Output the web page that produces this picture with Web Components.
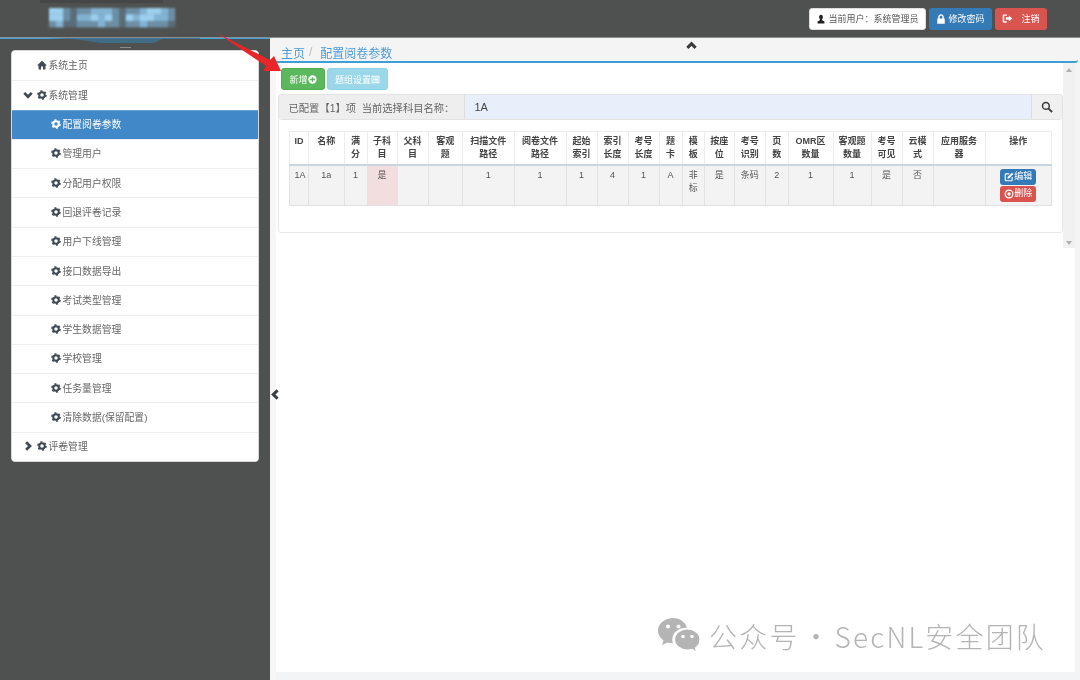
<!DOCTYPE html>
<html lang="zh">
<head>
<meta charset="utf-8">
<title>配置阅卷参数</title>
<style>
html,body{margin:0;padding:0;background:#fff}
body{font-family:"Liberation Sans","Noto Sans CJK SC",sans-serif;font-size:10px;color:#555}
</style>
</head>
<body>
<x-app></x-app>
<script>
const ICONS={
home:'<path fill="currentColor" d="M8 1 16 8.600H13.500V15H9.600V10.200H6.400V15H2.500V8.600H0Z"/>',
cog:'<circle cx="8" cy="8" r="4.400" fill="none" stroke="currentColor" stroke-width="3.200"/><circle cx="8" cy="8" r="6.400" fill="none" stroke="currentColor" stroke-width="2.600" stroke-dasharray="3.200 3.500"/>',
down:'<path fill="none" stroke="currentColor" stroke-width="4.400" d="M2 4.600 8 10.800 14 4.600"/>',
right:'<path fill="none" stroke="currentColor" stroke-width="4.400" d="M5 2 11.200 8 5 14"/>',
left:'<path fill="none" stroke="currentColor" stroke-width="4.400" d="M11 2 4.800 8 11 14"/>',
up:'<path fill="none" stroke="currentColor" stroke-width="4.400" d="M2 11.400 8 5.200 14 11.400"/>',
user:'<path fill="currentColor" d="M8 1C6 1 5 2.500 5 4.500 5 6.500 6 8.500 6.600 9.500L2.500 12V15H13.500V12L9.400 9.500C10 8.500 11 6.500 11 4.500 11 2.500 10 1 8 1Z"/>',
lock:'<path fill="currentColor" fill-rule="evenodd" d="M2 7H3.500V4.800C3.500 2.400 5.600 .5 8 .5S12.500 2.400 12.500 4.800V7H14V15.500H2ZM5.800 7H10.200V4.800C10.200 3.600 9.200 2.800 8 2.800S5.800 3.600 5.800 4.800Z"/>',
logout:'<path fill="currentColor" d="M1 3.500C1 2.500 1.800 2 2.600 2H7V4H3.200V12H7V14H2.600C1.800 14 1 13.500 1 12.500Z"/><path fill="currentColor" d="M5.500 6.300H10V3.500L15 8 10 12.500V9.700H5.500Z"/>',
search:'<circle cx="6.500" cy="6.500" r="4.500" fill="none" stroke="currentColor" stroke-width="2"/><path stroke="currentColor" stroke-width="2.600" d="M9.800 9.800 14.800 14.800"/>',
plus:'<path fill="currentColor" fill-rule="evenodd" d="M8 .5A7.500 7.500 0 1 1 8 15.500 7.500 7.500 0 1 1 8 .5ZM6.800 3.800V6.800H3.800V9.200H6.800V12.200H9.200V9.200H12.200V6.800H9.200V3.800Z"/>',
list:'<path fill="currentColor" fill-rule="evenodd" d="M1 1.500H15V14.500H1ZM2.500 3V13H13.500V3ZM3.500 4.500H5V6H3.500ZM6 4.500H12.500V6H6ZM3.500 7.200H5V8.700H3.500ZM6 7.200H12.500V8.700H6ZM3.500 9.900H5V11.400H3.500ZM6 9.900H12.500V11.400H6Z"/>',
edit:'<path fill="none" stroke="currentColor" stroke-width="1.800" d="M8.500 3H3.300C2.500 3 2 3.500 2 4.300V12.700C2 13.500 2.500 14 3.300 14H11.700C12.500 14 13 13.500 13 12.700V8"/><path fill="currentColor" d="M12.800 1.200 14.900 3.300 8 10.200 5.400 10.700 5.900 8.100Z"/>',
remove:'<circle cx="8" cy="8" r="6.200" fill="none" stroke="currentColor" stroke-width="1.900"/><circle cx="8" cy="8" r="2.800" fill="currentColor"/>'
};
class XIcon extends HTMLElement{
  connectedCallback(){
    if(this.shadowRoot)return;
    const r=this.attachShadow({mode:'open'});
    const s=this.getAttribute('size')||10;
    r.innerHTML='<style>:host{display:inline-flex;flex:none;width:'+s+'px;height:'+s+'px}svg{width:100%;height:100%;display:block}</style><svg viewBox="0 0 16 16">'+ICONS[this.getAttribute('name')]+'</svg>';
  }
}
customElements.define('x-icon',XIcon);

class XBtn extends HTMLElement{
  constructor(){super();this.attachShadow({mode:'open'}).innerHTML=`<style>
  :host{display:inline-flex;align-items:center;justify-content:center;box-sizing:border-box;border-radius:3px;height:var(--h,22px);font-size:9px;color:#fff;background:var(--bg,#5cb85c);border:1px solid var(--bd,transparent);white-space:nowrap}
  </style><slot></slot>`}
}
customElements.define('x-btn',XBtn);

const MOSAIC=['331011222101123321','331022323103233221','120011121101121110'];
const MC=['#5a6c78','#6d8fa6','#83b3d3','#9cd0ee'];
const cells=MOSAIC.map((row,y)=>[...row].map((c,x)=>`<rect x="${9+x*7}" y="${8+y*6.400}" width="7.200" height="6.600" fill="${MC[+c]}"/>`).join('')).join('');

class XTopbar extends HTMLElement{
  constructor(){super();this.attachShadow({mode:'open'}).innerHTML=`<style>
  :host{display:flex;justify-content:flex-end;align-items:center;box-sizing:border-box;height:38px;background:#4f5150;padding:0 33px 0 0;gap:3px;border-bottom:1px solid #8d8f8f;position:relative;z-index:1}
  .u{width:117px;--bg:#fff;--bd:#ddd;color:#555;gap:2px}
  .p{width:63px;--bg:#337ab7;gap:2px}
  .o{width:52px;--bg:#d9534f;gap:8px}
  .line{position:absolute;left:0;bottom:-2px;width:270px;height:1.500px;background:#3aa6e6}
  .logo{position:absolute;left:40px;top:0;width:170px;height:48px}
  .u x-icon{color:#222}
  </style>
  <div class="line"></div>
  <svg class="logo" viewBox="0 0 170 48"><defs><filter id="b" x="-10%" y="-30%" width="120%" height="160%"><feGaussianBlur stdDeviation="1.300"/></filter></defs>
    <rect x="-7" y="0" width="130" height="3" fill="#454746"/>
    <g filter="url(#b)"><rect x="9" y="8" width="126" height="19" fill="#5f7887"/>${cells}</g>
    <path d="M7 38H160V39L122 39 114 43H60L38 39.500Z" fill="#3f6f8c" opacity=".9"/>
    <rect x="80" y="47" width="11" height="1" fill="#8a8c8c"/>
  </svg>
  <x-btn class="u"><x-icon name="user" size="10"></x-icon>当前用户：系统管理员</x-btn>
  <x-btn class="p"><x-icon name="lock" size="10"></x-icon>修改密码</x-btn>
  <x-btn class="o"><x-icon name="logout" size="11"></x-icon>注销</x-btn>`}
}
customElements.define('x-topbar',XTopbar);

class XNavItem extends HTMLElement{
  constructor(){super();
    const lvl=this.getAttribute('level')||'1';
    const arrow=this.getAttribute('arrow');
    const icon=this.getAttribute('icon')||'cog';
    this.attachShadow({mode:'open'}).innerHTML=`<style>
    :host{display:flex;align-items:center;box-sizing:border-box;height:100%;border-top:1px solid #eee;color:#666;font-size:9.800px;gap:2px;padding:0 0 1px ${lvl==='2'?'38.500px':'10.500px'};background:#fff}
    :host(:first-child){border-top:0}
    :host([active]){background:#4088c8;color:#fff;border-top-color:#69a3d6}
    x-icon{color:#3f4a55}
    :host([active]) x-icon{color:#fff}
    .a{width:11px;display:inline-flex;color:#3f4a55;margin-right:1px}
    .i{display:inline-flex}
    </style>
    ${lvl==='1'?'<span class="a">'+(arrow?'<x-icon name="'+arrow+'" size="10"></x-icon>':'')+'</span>':''}
    <span class="i"><x-icon name="${icon}" size="10"></x-icon></span><span><slot></slot></span>`}
}
customElements.define('x-nav-item',XNavItem);

class XSidenav extends HTMLElement{
  constructor(){super();this.attachShadow({mode:'open'}).innerHTML=`<style>
  :host{display:block;box-sizing:border-box;background:#4f5150;padding:12px 11px 0 11px}
  .card{display:grid;grid-template-rows:repeat(14,1fr);height:412px;box-sizing:border-box;background:#fff;border:1px solid #d8d8d8;border-radius:4px;overflow:hidden}
  </style><div class="card"><slot></slot></div>`}
}
customElements.define('x-sidenav',XSidenav);

class XCrumbs extends HTMLElement{
  constructor(){super();this.attachShadow({mode:'open'}).innerHTML=`<style>
  :host{display:flex;align-items:center;box-sizing:border-box;height:25px;background:#f4f4f4;border-bottom:2px solid #3d9fd8;border-radius:0 0 3px 0;padding:5px 0 0 11px;color:#4d9bd9;font-size:12px;position:relative;margin-right:-3px}
  .s{color:#bbb;margin:0 8px 0 4px;font-size:12px}
  x-icon{position:absolute;left:416px;top:2px;color:#3a3a3a}
  </style><span>主页</span><span class="s">/</span><span>配置阅卷参数</span><x-icon name="up" size="11"></x-icon>`}
}
customElements.define('x-crumbs',XCrumbs);

class XToolbar extends HTMLElement{
  constructor(){super();this.attachShadow({mode:'open'}).innerHTML=`<style>
  :host{display:flex;gap:2px;padding:5px 0 4px 5px}
  .a{width:44px;--bg:#5cb85c;--bd:#4cae4c}
  .b{width:61px;--bg:#9ad7e9;--bd:#8fd2e6}
  </style><x-btn class="a">新增<x-icon name="plus" size="9"></x-icon></x-btn><x-btn class="b">题组设置<x-icon name="list" size="9"></x-icon></x-btn>`}
}
customElements.define('x-toolbar',XToolbar);

class XSearchRow extends HTMLElement{
  constructor(){super();this.attachShadow({mode:'open'}).innerHTML=`<style>
  :host{display:grid;grid-template-columns:186px 1fr 31px;height:26px;box-sizing:border-box;border:1px solid #e3e3e3;border-radius:4px;overflow:hidden;font-size:10.300px;margin:-1px -1px 0}
  .l{background:#eee;display:flex;align-items:center;padding-left:10px;color:#666;border-right:1px solid #ddd;white-space:pre}
  .m{background:#e8effb;display:flex;align-items:center;padding-left:10px;color:#444;font-size:11px}
  .r{background:#f0f0f0;border-left:1px solid #ddd;display:flex;align-items:center;justify-content:center;color:#3a3a3a}
  </style><div class="l">已配置【1】项  当前选择科目名称：</div><div class="m">1A</div><div class="r"><x-icon name="search" size="12"></x-icon></div>`}
}
customElements.define('x-search-row',XSearchRow);

class XConfigTable extends HTMLElement{
  constructor(){super();
  const cols=[[19,'ID','1A'],[35.500,'名称','1a'],[23,'满分','1'],[30,'子科目','是'],[31,'父科目',''],[34.500,'客观题',''],[51.500,'扫描文件路径','1'],[52,'阅卷文件路径','1'],[31,'起始索引','1'],[31,'索引长度','4'],[31,'考号长度','1'],[23,'题卡','A'],[22.500,'模板','非标'],[29.500,'按座位','是'],[31.500,'考号识别','条码'],[22.500,'页数','2'],[45,'OMR区数量','1'],[38,'客观题数量','1'],[31,'考号可见','是'],[31,'云模式','否'],[52,'应用服务器',''],[66.500,'操作',null]];
  const colg=cols.map(c=>`<col style="width:${c[0]}px">`).join('');
  const th=cols.map(c=>`<th>${c[1]}</th>`).join('');
  const td=cols.map((c,i)=>c[2]===null?`<td class="ops"><x-btn class="e"><x-icon name="edit" size="10"></x-icon>编辑</x-btn><x-btn class="d"><x-icon name="remove" size="10"></x-icon>删除</x-btn></td>`:`<td${i===3?' class="hl"':''}>${c[2]}</td>`).join('');
  this.attachShadow({mode:'open'}).innerHTML=`<style>
  :host{display:block;padding:11px 0 0 10.500px}
  table{border-collapse:collapse;table-layout:fixed;width:761px;font-size:9px;line-height:13px;color:#555;border:1px solid #e6e6e6}
  th{height:33px;box-sizing:border-box;border:1px solid #ececec;border-bottom:2px solid #c9d4e0;padding:3px 4.500px 0;vertical-align:top;font-weight:700;color:#444;text-align:center;background:#fff}
  td{height:41px;box-sizing:border-box;border:1px solid #e2e2e2;padding:3px 4.500px 0;vertical-align:top;text-align:center;background:#f3f3f3}
  td.hl{background:#f2dede}
  td.ops{padding:3px 0 0}
  x-btn{width:36px;--h:16px;margin:0 auto;display:flex;font-size:9px}
  .e{--bg:#337ab7}
  .d{--bg:#d9534f;margin-top:1px}
  </style><table><colgroup>${colg}</colgroup><thead><tr>${th}</tr></thead><tbody><tr>${td}</tr></tbody></table>`}
}
customElements.define('x-config-table',XConfigTable);

class XPanel extends HTMLElement{
  constructor(){super();this.attachShadow({mode:'open'}).innerHTML=`<style>
  :host{display:block;box-sizing:border-box;height:139px;margin-left:1.500px;border:1px solid #e8e8e8;border-radius:3px;background:#fff}
  </style><slot></slot>`}
}
customElements.define('x-panel',XPanel);

class XScroll extends HTMLElement{
  constructor(){super();this.attachShadow({mode:'open'}).innerHTML=`<style>
  :host{display:flex;flex-direction:column;justify-content:space-between;align-items:center;box-sizing:border-box;width:12px;height:185px;background:#f1f1f1;padding:5px 0 3px}
  i{width:0;height:0;border-left:3px solid transparent;border-right:3px solid transparent}
  .u{border-bottom:4px solid #b0b0b0}.d{border-top:4px solid #b0b0b0}
  </style><i class="u"></i><i class="d"></i>`}
}
customElements.define('x-scroll',XScroll);

class XWatermark extends HTMLElement{
  constructor(){super();this.attachShadow({mode:'open'}).innerHTML=`<style>
  :host{position:absolute;left:658px;top:616px;display:flex;align-items:center;gap:9px;color:#b4b4b4;font-family:"Noto Sans CJK SC","Noto Sans",sans-serif;font-size:28px;letter-spacing:2.200px;word-spacing:-6px;font-weight:300;line-height:40px;white-space:nowrap}
  svg{width:42px;height:38px;display:block}
  </style><svg viewBox="0 0 42 38">
  <path fill="#b4b4b4" d="M15.500 1C7.500 1 0 6.200 0 13.500 0 18 2.500 21 5.500 23.500L4 28 9.500 25.500C11 26 13 26.300 15 26.300 14.500 25 14.300 23.800 14.300 22.500 14.300 15.500 21 10.500 29 10.800 27.500 5 21.500 1 15.500 1Z"/>
  <circle cx="10" cy="9.500" r="2" fill="#fff"/><circle cx="20.500" cy="9.500" r="2" fill="#fff"/>
  <path fill="#b4b4b4" stroke="#fff" stroke-width="1.200" d="M29.500 12C22.500 12 16.500 16.500 16.500 22.500 16.500 28.500 22.500 33 29.500 33 31 33 32.500 32.700 34 32.300L38.500 35.500 37.500 31C40.300 29 42 26 42 22.500 42 16.500 36.500 12 29.500 12Z"/>
  <circle cx="25" cy="19.500" r="1.800" fill="#fff"/><circle cx="34" cy="19.500" r="1.800" fill="#fff"/>
  </svg><span>公众号 · SecNL安全团队</span>`}
}
customElements.define('x-watermark',XWatermark);

class XApp extends HTMLElement{
  constructor(){super();this.attachShadow({mode:'open'}).innerHTML=`<style>
  :host{display:grid;grid-template-columns:270px 810px;grid-template-rows:38px 642px;width:1080px;height:680px;overflow:hidden;position:relative;filter:blur(.3px);font-family:"Liberation Sans","Noto Sans CJK SC",sans-serif}
  x-topbar{grid-column:1/3}
  main{display:grid;grid-template-columns:6px minmax(0,1fr) 5px;grid-template-rows:minmax(0,1fr) 8px;background:#fff;min-height:0;min-width:0}
  .lstrip{background:#f8f6f5;grid-row:1/3;position:relative}
  .lstrip x-icon{position:absolute;left:0;top:351px;color:#3a3f45;z-index:2}
  .center{display:flex;flex-direction:column;min-width:0;min-height:0;margin-left:-6px;width:calc(100% + 6px);position:relative}
  .rstrip{background:#f4f4f4}
  .bottom{grid-column:2/4;background:#f3f4f6}
  .work{display:grid;grid-template-columns:minmax(0,1fr) 12px;align-items:start;padding-left:6px}
  .arrow{position:absolute;left:215px;top:30px;width:72px;height:44px;overflow:visible;z-index:2}
  </style>
  <x-topbar></x-topbar>
  <x-sidenav>
    <x-nav-item icon="home">系统主页</x-nav-item>
    <x-nav-item arrow="down">系统管理</x-nav-item>
    <x-nav-item level="2" active>配置阅卷参数</x-nav-item>
    <x-nav-item level="2">管理用户</x-nav-item>
    <x-nav-item level="2">分配用户权限</x-nav-item>
    <x-nav-item level="2">回退评卷记录</x-nav-item>
    <x-nav-item level="2">用户下线管理</x-nav-item>
    <x-nav-item level="2">接口数据导出</x-nav-item>
    <x-nav-item level="2">考试类型管理</x-nav-item>
    <x-nav-item level="2">学生数据管理</x-nav-item>
    <x-nav-item level="2">学校管理</x-nav-item>
    <x-nav-item level="2">任务量管理</x-nav-item>
    <x-nav-item level="2">清除数据(保留配置)</x-nav-item>
    <x-nav-item arrow="right">评卷管理</x-nav-item>
  </x-sidenav>
  <main>
    <div class="lstrip"><x-icon name="left" size="11"></x-icon></div>
    <div class="center">
      <x-crumbs></x-crumbs>
      <div class="work">
        <div>
          <x-toolbar></x-toolbar>
          <x-panel><x-search-row></x-search-row><x-config-table></x-config-table></x-panel>
        </div>
        <x-scroll></x-scroll>
      </div>
    </div>
    <div class="rstrip"></div>
    <div class="bottom"></div>
  </main>
  <svg class="arrow" viewBox="215 30 72 44"><path fill="#e8262a" d="M217 33 270 60 274 56 281 71 263 71 266 66Z"/></svg>
  <x-watermark></x-watermark>`}
}
customElements.define('x-app',XApp);
</script>
</body>
</html>
